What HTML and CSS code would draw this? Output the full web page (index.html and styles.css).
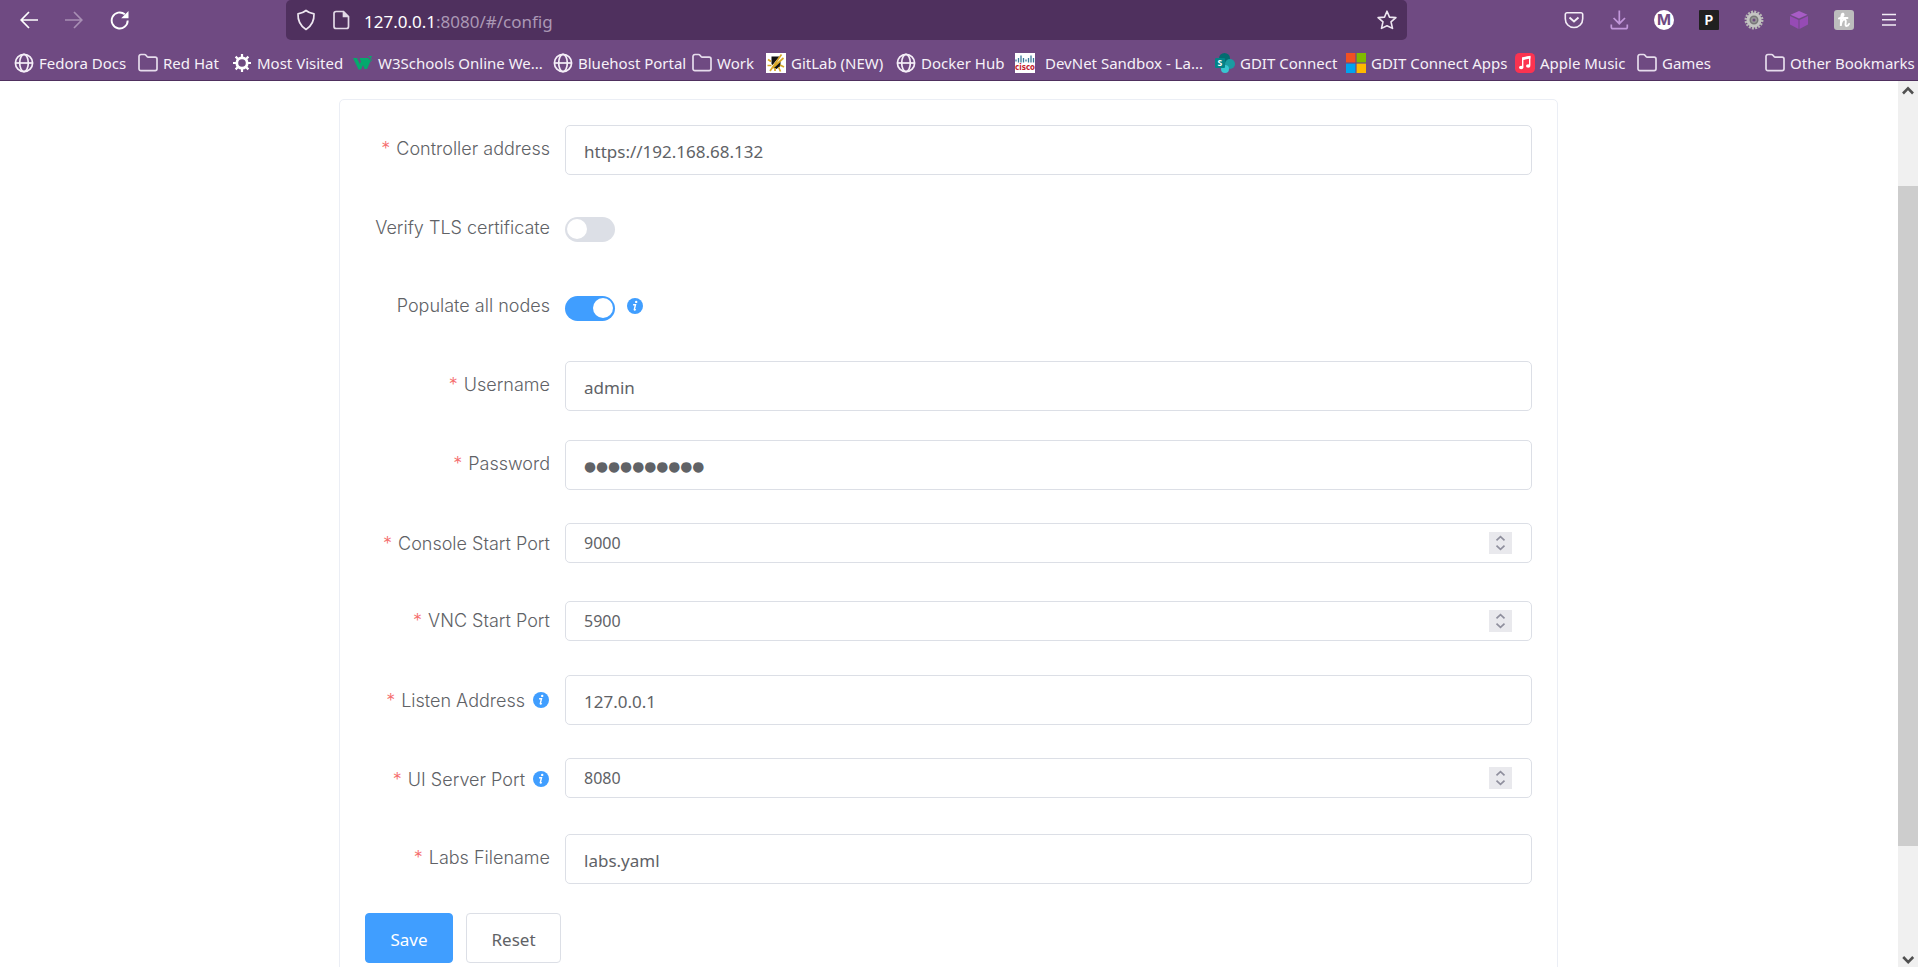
FILE: index.html
```html
<!DOCTYPE html>
<html lang="en">
<head>
<meta charset="utf-8">
<title>Config</title>
<link rel="stylesheet" href="styles.css">
</head>
<body>
<svg class="defs" width="0" height="0">
  <symbol id="globe" viewBox="0 0 20 20"><g fill="none" stroke="#f5eff8" stroke-width="1.7"><circle cx="10" cy="10" r="8.6"/><ellipse cx="10" cy="10" rx="4.3" ry="8.6"/><path d="M1.4 10h17.2"/></g></symbol>
  <symbol id="folder" viewBox="0 0 20 20"><path d="M1 15.7V3.4a1.9 1.9 0 0 1 1.9-1.9h3.6c.7 0 1.100.2 1.500.7l1 1.300c.3.4.7.6 1.200.6h6.900A1.900 1.900 0 0 1 19 6v9.700a1.900 1.900 0 0 1-1.900 1.900H2.900A1.900 1.900 0 0 1 1 15.700z" fill="none" stroke="#e6dcec" stroke-width="1.7"/></symbol>
  <symbol id="info" viewBox="0 0 16 16"><circle cx="8" cy="8" r="8" fill="#409eff"/><circle cx="9.200" cy="3.900" r="1.200" fill="#fff"/><path d="M6.100 6.700h2.400L7.300 11.600c-.1.600.5.600 1.400-.3" fill="none" stroke="#fff" stroke-width="1.400"/></symbol>
  <symbol id="spin" viewBox="0 0 23 22"><rect width="23" height="22" fill="#e9e9ed"/><path d="M7.500 8.300l4-3.700 4 3.700M7.500 13.700l4 3.700 4-3.700" fill="none" stroke="#8f8f9d" stroke-width="1.700"/></symbol>
</svg>

<header class="chrome">
  <div class="toolbar">
    <nav class="nav-buttons">
      <svg width="18" height="20" viewBox="0 0 18 20"><path d="M18 10H1.500M9 2L1.200 10 9 18" fill="none" stroke="#fff" stroke-width="1.700"/></svg>
      <svg width="18" height="20" viewBox="0 0 18 20"><path d="M0 10h16.500M9 2l7.800 8L9 18" fill="none" stroke="#a88fb4" stroke-width="1.700"/></svg>
      <svg width="20" height="20" viewBox="0 0 20 20"><path d="M17.700 10.500A8 8 0 1 1 14.800 4.300" fill="none" stroke="#fff" stroke-width="1.900"/><path d="M18.500 1v7.300h-7.300z" fill="#fff"/></svg>
    </nav>
    <div class="urlbar">
      <svg width="20" height="22" viewBox="0 0 20 22"><path d="M10 1.500c2 1.700 4.500 2.700 8 3.300.3 6.700-2 12-8 15.700C4 16.800 1.700 11.500 2 4.800c3.500-.6 6-1.600 8-3.300z" fill="none" stroke="#eee7f1" stroke-width="1.700" stroke-linejoin="round"/></svg>
      <svg class="page-icon" width="17" height="20" viewBox="0 0 17 20"><path d="M3 1.500h7.500L15.500 6.500V16.500a2 2 0 0 1-2 2H3a2 2 0 0 1-2-2v-13a2 2 0 0 1 2-2z" fill="none" stroke="#e2d9e7" stroke-width="1.700"/><path d="M9.700 1l6.300 6.300H9.700z" fill="#e2d9e7"/></svg>
      <span class="url"><b>127.0.0.1</b>:8080/#/config</span>
      <svg class="star" width="20" height="20" viewBox="0 0 20 20"><path d="M10 1.200l2.500 5.900 6.400.5-4.900 4.200 1.500 6.600L10 15.700l-5.500 2.700L6 11.800 1.100 7.600l6.400-.5z" fill="none" stroke="#eee7f1" stroke-width="1.600" stroke-linejoin="round"/></svg>
    </div>
    <div class="extensions">
      <svg width="20" height="20" viewBox="0 0 20 20"><path d="M3 2.700h14a1.700 1.700 0 0 1 1.700 1.700v4.300c0 5-3.700 8.800-8.700 8.800S1.300 13.700 1.300 8.700V4.400A1.700 1.700 0 0 1 3 2.700z" fill="none" stroke="#f3edf6" stroke-width="1.600"/><path d="M5.500 7.500L10 11.500l4.500-4" fill="none" stroke="#f3edf6" stroke-width="1.900"/></svg>
      <svg width="20" height="20" viewBox="0 0 20 20"><path d="M10.300 0.500v13M4.600 8l5.700 5.700L16 8M2.300 14.500V17c0 1 .8 1.700 1.700 1.700h12.700c1 0 1.600-.7 1.600-1.700v-2.500" fill="none" stroke="#c297da" stroke-width="1.700"/></svg>
      <span class="badge badge-m">M</span>
      <span class="badge badge-p">P</span>
      <svg width="20" height="20" viewBox="0 0 20 20"><circle cx="10" cy="10" r="8.200" fill="none" stroke="#b8b8b6" stroke-width="2.500" stroke-dasharray="2 1.220"/><circle cx="10" cy="10" r="6" fill="#777" stroke="#c4c4c2" stroke-width="3"/><circle cx="10" cy="10" r="3" fill="#979797"/><circle cx="10" cy="10" r="1.500" fill="#6d4a7d"/></svg>
      <svg width="20" height="20" viewBox="0 0 20 20"><path d="M10 1l8.500 3.800L10 8.600 1.500 4.800z" fill="#a85cc6"/><path d="M1 6l8.500 3.900V19L1 14.600zM19 6l-8.500 3.900V19l8.500-4.400z" fill="#964bb5"/></svg>
      <span class="badge badge-h"><svg width="12" height="16" viewBox="0 0 12 16"><path d="M1 6.500C5 5.500 6.500 2.500 5 1.700 3.500 1 3 5 2.800 14c.3-4 1.500-6.500 3.700-6.500 3 0-.5 6.500 2 6.500 1.200 0 2-.8 2.500-2M4.500 6h5" fill="none" stroke="#fff" stroke-width="1.900" stroke-linecap="round"/></svg></span>
      <svg width="20" height="20" viewBox="0 0 20 20"><path d="M3 4.500h14M3 9.700h14M3 15h14" stroke="#f3edf6" stroke-width="1.600"/></svg>
    </div>
  </div>
  <div class="bookmarks">
    <a class="bm bm-fedora"><svg><use href="#globe"/></svg><span>Fedora Docs</span></a>
    <a class="bm bm-redhat"><svg><use href="#folder"/></svg><span>Red Hat</span></a>
    <a class="bm bm-visited"><svg viewBox="0 0 20 20"><circle cx="10" cy="10" r="5.200" fill="none" stroke="#fff" stroke-width="2.800"/><path d="M10 1v4M10 15v4M1 10h4M15 10h4M3.600 3.600l2.900 2.900M13.500 13.500l2.900 2.900M3.600 16.400l2.900-2.900M13.500 6.500l2.900-2.900" stroke="#fff" stroke-width="2.200"/></svg><span>Most Visited</span></a>
    <a class="bm bm-w3"><svg viewBox="0 0 20 20"><path d="M0 5h4l2.800 6L8 8.500 6.500 5H15l2.500 3-3.500 8h-2.500L10 12l-2 4.500H5.500z" fill="#04aa6d"/><path d="M15.500 3.500h3l-1.500 2c2 0 2 2.800-.2 2.800-.6 0-1-.2-1.400-.5" fill="none" stroke="#04aa6d"/></svg><span>W3Schools Online We...</span></a>
    <a class="bm bm-bluehost"><svg><use href="#globe"/></svg><span>Bluehost Portal</span></a>
    <a class="bm bm-work"><svg><use href="#folder"/></svg><span>Work</span></a>
    <a class="bm bm-gitlab"><svg viewBox="0 0 20 20"><rect width="20" height="20" fill="#fff"/><path d="M5.500 3.500h8l-7 8.500-1-1zM14.500 8v5l-4 3-3-1z" fill="#111"/><path d="M15.500 1.500L4 18M17.500 5l-11 10M2 6.500l3 2M1.500 12.500h4M14 12l4 2M12.500 14l2 4.500M9 15v3" stroke="#d9a728" stroke-width="1.700"/></svg><span>GitLab (NEW)</span></a>
    <a class="bm bm-docker"><svg><use href="#globe"/></svg><span>Docker Hub</span></a>
    <a class="bm bm-devnet"><svg viewBox="0 0 20 20"><rect width="20" height="20" fill="#fff"/><path d="M1 6.500v2M3.500 5v4.500M6 2.500v7M8.500 5v4.500M11 6.500v2M13.500 5v4.500M16 2.500v7M18.500 5v4.500" stroke="#39799a" stroke-width="1.300"/><text x="0" y="16.800" class="cisco-mark" textLength="20" lengthAdjust="spacingAndGlyphs">cisco</text></svg><span>DevNet Sandbox - La...</span></a>
    <a class="bm bm-gdit"><svg viewBox="0 0 20 20"><circle cx="9.500" cy="5.500" r="5.500" fill="#036c70"/><circle cx="15" cy="11" r="5" fill="#1a9ba1"/><circle cx="10" cy="16" r="4" fill="#37c6d0"/><rect y="5" width="10" height="10" rx="1" fill="#038387"/><text x="2.500" y="13" class="s-mark">S</text></svg><span>GDIT Connect</span></a>
    <a class="bm bm-apps"><svg viewBox="0 0 20 20"><path d="M0 0h9.400v9.400H0z" fill="#f25022"/><path d="M10.600 0H20v9.400h-9.400z" fill="#7fba00"/><path d="M0 10.600h9.400V20H0z" fill="#00a4ef"/><path d="M10.600 10.600H20V20h-9.400z" fill="#ffb900"/></svg><span>GDIT Connect Apps</span></a>
    <a class="bm bm-music"><svg viewBox="0 0 20 20"><rect width="20" height="20" rx="4.500" fill="#fb3350"/><path d="M7.700 14V5l7-1.500v9" fill="none" stroke="#fff" stroke-width="1.400"/><path d="M7 4.800l8.400-1.800v2.500L7 7.300z" fill="#fff"/><ellipse cx="6.200" cy="14.500" rx="2.200" ry="1.800" fill="#fff"/><ellipse cx="13.200" cy="13" rx="2.200" ry="1.800" fill="#fff"/></svg><span>Apple Music</span></a>
    <a class="bm bm-games"><svg><use href="#folder"/></svg><span>Games</span></a>
    <a class="bm bm-other"><svg><use href="#folder"/></svg><span>Other Bookmarks</span></a>
  </div>
</header>

<div class="viewport">
  <main class="content">
    <form class="card">
      <div class="rows">
        <div class="label"><i>*</i><span class="t-controller">Controller address</span></div>
        <div class="input"><span class="v-url">https://192.168.68.132</span></div>

        <div class="label"><span class="t-verify">Verify TLS certificate</span></div>
        <div class="switch"></div>

        <div class="label up"><span class="t-populate">Populate all nodes</span></div>
        <div class="switch-line"><div class="switch on"></div><svg class="info"><use href="#info"/></svg></div>

        <div class="label"><i>*</i><span class="t-user">Username</span></div>
        <div class="input"><span class="v-admin">admin</span></div>

        <div class="label"><i>*</i><span class="t-pass">Password</span></div>
        <div class="input"><span class="dots">●●●●●●●●●●</span></div>

        <div class="label down"><i>*</i><span class="t-console">Console Start Port</span></div>
        <div class="input number low"><span>9000</span><svg class="spin"><use href="#spin"/></svg></div>

        <div class="label"><i>*</i><span class="t-vnc">VNC Start Port</span></div>
        <div class="input number"><span>5900</span><svg class="spin"><use href="#spin"/></svg></div>

        <div class="label down2"><i>*</i><span class="t-listen">Listen Address</span><svg class="info"><use href="#info"/></svg></div>
        <div class="input"><span class="v-ip">127.0.0.1</span></div>

        <div class="label down2"><i>*</i><span class="t-ui">UI Server Port</span><svg class="info"><use href="#info"/></svg></div>
        <div class="input number"><span>8080</span><svg class="spin"><use href="#spin"/></svg></div>

        <div class="label"><i>*</i><span class="t-labs">Labs Filename</span></div>
        <div class="input"><span class="v-labs">labs.yaml</span></div>
      </div>
      <div class="actions">
        <div class="btn primary">Save</div>
        <div class="btn">Reset</div>
      </div>
    </form>
  </main>
  <aside class="scrollbar">
    <svg width="20" height="20" viewBox="0 0 20 20"><path d="M5 12.500l5-5.200 5 5.200" fill="none" stroke="#505050" stroke-width="2.600"/></svg>
    <div class="thumb"></div>
    <svg width="20" height="20" viewBox="0 0 20 20"><path d="M5.200 10l5 5.200 5-5.200" fill="none" stroke="#505050" stroke-width="2.600"/></svg>
  </aside>
</div>
</body>
</html>
```
FILE: styles.css
```css
* { box-sizing: border-box; }
body {
  margin: 0;
  width: 1918px;
  height: 967px;
  overflow: hidden;
  background: #fff;
  color: #606266;
  font-family: "Noto Sans", "Open Sans", sans-serif;
  display: flex;
  flex-direction: column;
}
svg { display: block; flex: none; }
.defs { position: absolute; }

/* browser chrome */
.chrome {
  height: 81px;
  flex: none;
  background: #6f4a82;
  border-bottom: 1px solid #4f305e;
  color: #f6f1f8;
}
.toolbar { display: flex; height: 40px; }
.nav-buttons {
  width: 286px;
  padding-left: 20px;
  display: flex;
  align-items: center;
  gap: 27px;
}
.urlbar {
  width: 1121px;
  height: 40px;
  background: #4f305e;
  border-radius: 5px;
  display: flex;
  align-items: center;
  padding: 0 10px;
}
.page-icon { margin: 0 14px 0 17px; }
.url {
  font-size: 17px;
  line-height: 24px;
  color: #ab98b5;
  padding-top: 3px;
  white-space: nowrap;
}
.url b { font-weight: 400; color: #fff; }
.star { margin-left: auto; }
.extensions {
  margin-left: 157px;
  display: flex;
  align-items: center;
  gap: 25px;
}
.badge {
  width: 20px;
  height: 20px;
  display: flex;
  align-items: center;
  justify-content: center;
  font: 700 15px/20px Inter, sans-serif;
}
.badge-m { border-radius: 50%; background: #fff; color: #6f4a82; }
.badge-p { border-radius: 1px; background: #20201f; color: #fff; font-size: 13px; }
.badge-h { border-radius: 3px; background: #bdbdbd; }
.bookmarks {
  height: 40px;
  padding: 6px 0 0 14px;
  display: flex;
  align-items: center;
}
.bm {
  flex: none;
  display: flex;
  align-items: center;
  font-size: 15px;
  white-space: nowrap;
}
.bm svg { width: 20px; height: 20px; margin-right: 5px; }
.bm-fedora { width: 124px; }
.bm-redhat { width: 94px; }
.bm-visited { width: 121px; }
.bm-w3 { width: 200px; }
.bm-bluehost { width: 139px; }
.bm-work { width: 74px; }
.bm-gitlab { width: 130px; }
.bm-docker { width: 119px; }
.bm-devnet { width: 200px; }
.bm-gdit { width: 131px; }
.bm-apps { width: 169px; }
.bm-music { width: 122px; }
.bm-games { width: 128px; }
.bm-devnet svg { margin-right: 10px; }
.cisco-mark { font: 700 8.500px "DejaVu Sans", sans-serif; fill: #c4202b; }
.s-mark { font: 700 8.500px "Noto Sans", sans-serif; fill: #fff; }

/* page */
.viewport { flex: 1; display: flex; min-height: 0; }
.content { flex: 1; padding: 18px 340px 0 339px; overflow: hidden; }
.card {
  height: 920px;
  border: 1px solid #ebeef5;
  border-radius: 5px;
  padding: 25px;
}
.rows {
  display: grid;
  grid-template-columns: 185px 967px;
  column-gap: 15px;
  grid-template-rows: 79px 79px 78px 79px 79px 78px 78px 79px 80px 79px;
  align-items: start;
}
.label {
  display: flex;
  justify-content: flex-end;
  font: 300 18px/25px Inter, sans-serif;
  padding-top: 11px;
  white-space: nowrap;
}
.label.up { padding-top: 10px; }
.label.down { padding-top: 12px; }
.label.down2 { padding-top: 13px; }
.label i { font-style: normal; color: #f56c6c; margin-right: 6px; }
.label .info { margin: 4px 1px 0 8px; }
.info { width: 16px; height: 16px; }
.input {
  height: 50px;
  border: 1px solid #dcdfe6;
  border-radius: 5px;
  padding: 2px 18px 0;
  display: flex;
  align-items: center;
  font-size: 17px;
}
.input.number { height: 40px; margin-top: 4px; font-size: 16px; padding: 0 19px 0 18px; }
.spin { width: 23px; height: 22px; margin-left: auto; }
.dots { font: 13.800px/20px "DejaVu Sans", sans-serif; }
.switch {
  width: 50px;
  height: 25px;
  border-radius: 13px;
  background: #dcdfe6;
  margin-top: 13px;
  padding: 2px;
  display: flex;
}
.switch::before { content: ""; width: 20px; height: 20px; border-radius: 50%; background: #fff; }
.switch.on { background: #409eff; justify-content: flex-end; }
.switch-line { display: flex; }
.switch-line .info { margin: 15px 0 0 12px; }
.actions { display: flex; gap: 13px; }
.btn {
  width: 95px;
  height: 50px;
  border: 1px solid #dcdfe6;
  border-radius: 4px;
  font-size: 17px;
  display: flex;
  align-items: center;
  justify-content: center;
  padding-top: 2px;
}
.btn.primary { width: 88px; background: #409eff; border-color: #409eff; color: #fff; }
.scrollbar {
  width: 20px;
  background: #f0f0f0;
  display: flex;
  flex-direction: column;
}
.thumb { height: 660px; margin: 85px 0 101px; background: #cdcdcd; }
```
